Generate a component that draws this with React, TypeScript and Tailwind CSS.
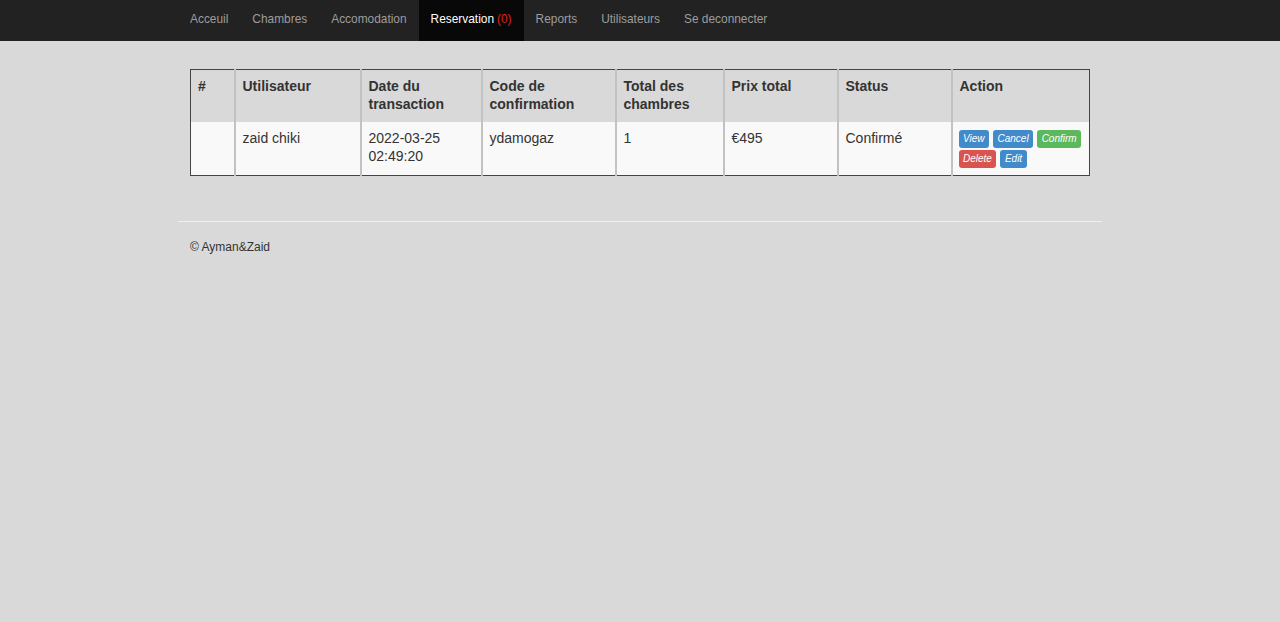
import React from "react";

const navItems = ["Acceuil", "Chambres", "Accomodation", "Reservation", "Reports", "Utilisateurs", "Se deconnecter"];

const cols = [
  { w: 44, h: "#" },
  { w: 126, h: "Utilisateur" },
  { w: 121, h: "Date du transaction" },
  { w: 134, h: "Code de confirmation" },
  { w: 108, h: "Total des chambres" },
  { w: 114, h: "Prix total" },
  { w: 114, h: "Status" },
  { w: 138, h: "Action" },
];

function Btn({ label, color }: { label: string; color: string }) {
  return (
    <span className={`inline-block rounded-[3px] px-[4.5px] h-[18px] leading-[18px] text-[10px] italic text-white ${color}`}>
      {label}
    </span>
  );
}

export default function App() {
  return (
    <div className="min-h-[622px] bg-[#d9d9d9] text-[#333]" style={{ fontFamily: '"Liberation Sans", Arial, sans-serif' }}>
      <div className="h-[41px] bg-[#222222] flex pl-[178px]">
        {navItems.map((n) => (
          <div
            key={n}
            className={`h-[41px] px-[12px] pb-[2px] flex items-center text-[11.9px] ${n === "Reservation" ? "bg-[#080808] text-white" : "text-[#9d9d9d]"}`}
          >
            {n}
            {n === "Reservation" && <span className="text-[#e0201b] ml-[3px]">(0)</span>}
          </div>
        ))}
      </div>

      <div className="pl-[190px] pt-[28px]">
        <table className="table-fixed border border-[#444] border-collapse text-[14px] leading-[18px]" style={{ width: 899 }}>
          <colgroup>
            {cols.map((c, i) => (
              <col key={i} style={{ width: c.w }} />
            ))}
          </colgroup>
          <thead>
            <tr className="bg-[#d9d9d9]">
              {cols.map((c, i) => (
                <th
                  key={i}
                  className={`text-left align-top font-bold pl-[7px] pr-[5px] pt-[7px] pb-[9px] h-[52px] ${i > 0 ? "border-l-2 border-l-[#c2c2c2]" : ""}`}
                >
                  {c.h}
                </th>
              ))}
            </tr>
          </thead>
          <tbody>
            <tr className="bg-[#f9f9f9]">
              {[
                "",
                "zaid chiki",
                <>2022-03-25<br />02:49:20</>,
                "ydamogaz",
                "1",
                "€495",
                "Confirmé",
              ].map((v, i) => (
                <td
                  key={i}
                  className={`align-top pl-[7px] pr-[5px] pt-[7px] pb-[9px] h-[53px] ${i > 0 ? "border-l-2 border-l-[#c2c2c2]" : ""}`}
                >
                  {v}
                </td>
              ))}
              <td className="align-top pl-[6px] pr-[3px] pt-[8px] pb-[6px] border-l-2 border-l-[#c2c2c2]">
                <div className="flex flex-wrap gap-x-[4px] gap-y-[2px] w-[126px]">
                  <Btn label="View" color="bg-[#428bca]" />
                  <Btn label="Cancel" color="bg-[#428bca]" />
                  <Btn label="Confirm" color="bg-[#5cb85c]" />
                  <Btn label="Delete" color="bg-[#d9534f]" />
                  <Btn label="Edit" color="bg-[#428bca]" />
                </div>
              </td>
            </tr>
          </tbody>
        </table>
      </div>

      <div className="ml-[178px] w-[924px] mt-[45px] border-t border-[#eeeeee]" />
      <div className="pl-[190px] pt-[16px] text-[12px]">© Ayman&amp;Zaid</div>
    </div>
  );
}
